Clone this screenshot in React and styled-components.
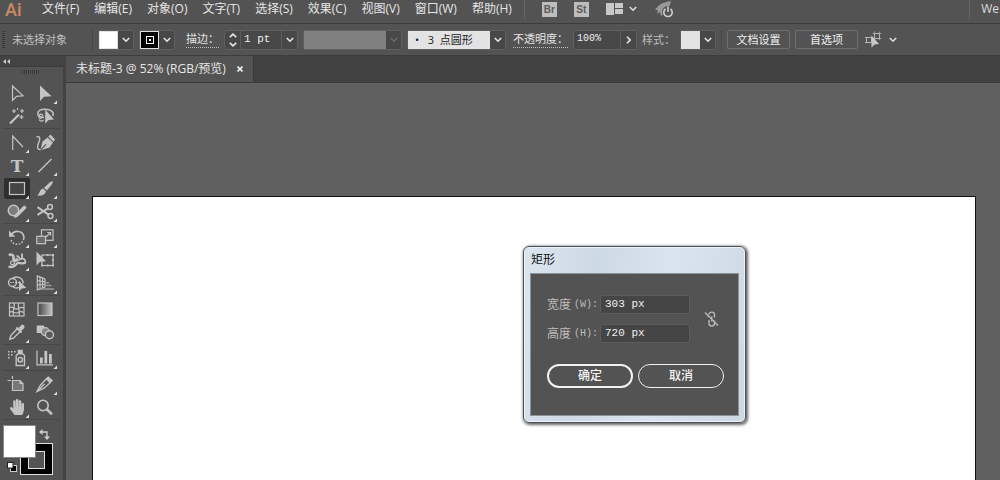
import React from 'react';
import styled, { createGlobalStyle, css } from 'styled-components';
import { FaHandPaper } from 'react-icons/fa';

const GlobalStyle = createGlobalStyle`
  * {
    box-sizing: border-box;
  }

  body {
    margin: 0;
    background: #606060;
    color: #dcdcdc;
    font-family: "Open Sans", "Noto Sans CJK SC", sans-serif;
    font-size: 12px;
    line-height: 16px;
  }

  button,
  input,
  select {
    margin: 0;
    padding: 0;
    border: none;
    border-radius: 0;
    outline: none;
    background: none;
    color: inherit;
    font: inherit;
  }

  svg {
    display: block;
    flex: none;
  }
`;

const Page = styled.div`
  display: flex;
  flex-direction: column;
  height: 100vh;
  overflow: hidden;
`;

/* ---------- menu bar ---------- */

const MenuBar = styled.header`
  display: flex;
  align-items: center;
  flex: none;
  height: 24px;
  padding: 0 1px 5px 5px;
  border-bottom: 1px solid #3c3c3c;
  background: #535353;
`;

const Logo = styled.span`
  align-self: flex-start;
  width: 28px;
  color: #c98a62;
  font-family: Roboto, sans-serif;
  font-size: 18px;
  font-weight: 500;
  line-height: 20px;
`;

const Menus = styled.nav`
  display: flex;
  gap: 15px;
  padding-left: 9px;
`;

const MenuItem = styled.button`
  white-space: nowrap;
  color: #e6e6e6;
`;

const Divider = styled.span`
  flex: none;
  width: 1px;
  height: 20px;
  background: ${({ $light }) => ($light ? '#666' : '#464646')};
`;

const AppButton = styled.button`
  width: 15px;
  height: 15px;
  background: #bdbdbd;
  color: #5b5b5b;
  font-family: "Liberation Sans", sans-serif;
  font-size: 10px;
  font-weight: bold;
  line-height: 15px;
`;

const MenuTools = styled.div`
  display: flex;
  align-items: center;
  flex: 1;
  gap: 17px;
  padding-left: 12px;
`;

const IconButton = styled.button`
  display: flex;
  align-items: center;
  gap: 6px;
`;

const Workspace = styled.button`
  padding-left: 11px;
  color: #dcdcdc;
`;

/* ---------- control bar ---------- */

const ControlBar = styled.div`
  display: flex;
  align-items: center;
  flex: none;
  height: 32px;
  padding-left: 2px;
  border-bottom: 1px solid #3c3c3c;
  background: #535353;
  font-size: 11px;
`;

const Grip = styled.span`
  flex: none;
  width: ${({ $wide }) => ($wide ? '18px' : '3px')};
  height: ${({ $wide }) => ($wide ? '4px' : '18px')};
  background: repeating-linear-gradient(
    ${({ $wide }) => ($wide ? '90deg' : '180deg')},
    #3a3a3a 0 1px,
    #535353 1px 2px
  );
`;

const Status = styled.span`
  width: 80px;
  margin-left: 7px;
  color: #bfbfbf;
  white-space: nowrap;
`;

const Controls = styled.div`
  display: flex;
  align-items: center;
  gap: 5px;
  padding-left: 5px;
`;

const Combo = styled.div`
  display: flex;
  height: 20px;
  margin-right: ${({ $space }) => $space || 0}px;
  border: 1px solid #606060;
  border-radius: 2px;
  background: #484848;
`;

const Swatch = styled.button`
  display: grid;
  place-items: center;
  width: 19px;
  height: 18px;
  border: 1px solid #e0e0e0;
  background: ${({ $color }) => $color};
`;

const Arrow = styled.button`
  display: grid;
  place-items: center;
  width: 15px;
  height: 18px;
  color: ${({ disabled }) => (disabled ? '#6c6c6c' : '#e6e6e6')};
`;

const Spinner = styled.button`
  display: grid;
  place-items: center;
  width: 15px;
  height: 18px;
  color: #e6e6e6;
`;

const numberText = css`
  color: #f0f0f0;
  font-family: "Liberation Mono", monospace;
  font-size: ${({ $small }) => ($small ? '10px' : '11px')};
`;

const ValueInput = styled.input`
  ${numberText}
  width: ${({ $width }) => $width}px;
  padding: 0 0 2px 3px;
  border-right: 1px solid #5c5c5c;
  ${({ $left }) => $left && 'border-left: 1px solid #5c5c5c;'}
`;

const Select = styled.select`
  appearance: none;
  width: 82px;
  height: 18px;
  padding: 0 0 0 7px;
  background: ${({ disabled }) => (disabled ? '#808080' : '#e3e3e3')};
  color: #222;
  opacity: 1;
`;

const DottedLabel = styled.label`
  height: 17px;
  border-bottom: 1px dotted #bdbdbd;
  color: #e4e4e4;
  white-space: nowrap;
`;

const PlainLabel = styled.span`
  color: #bdbdbd;
  white-space: nowrap;
`;

const BarButton = styled.button`
  width: 63px;
  height: 19px;
  border: 1px solid #6e6e6e;
  border-radius: 2px;
  color: #f0f0f0;
  line-height: 16px;
`;

/* ---------- main area ---------- */

const Main = styled.div`
  display: flex;
  flex: 1;
  min-height: 0;
`;

const ToolPanel = styled.aside`
  display: flex;
  flex-direction: column;
  flex: none;
  width: 66px;
  border-right: 3px solid #434343;
  background: #535353;
`;

const PanelHeader = styled.button`
  display: flex;
  align-items: center;
  height: 11px;
  padding-left: 3px;
  border-bottom: 1px solid #3c3c3c;
  background: #434343;
`;

const GripRow = styled.div`
  display: flex;
  justify-content: center;
  padding: 3px 2px 8px 0;
`;

const ToolGroup = styled.div`
  display: grid;
  grid-template-columns: 26px 26px;
  gap: 2px;
  margin: 0 3px;
  padding: 1px 0 1px 1px;
  border-bottom: 1px solid #484848;

  & + & {
    padding-top: 3px;
  }
`;

const Tool = styled.button`
  height: 21px;
  border-radius: 2px;
  background: ${({ $active }) => ($active ? '#2e2e2e' : 'none')};
  color: #c4c4c4;
`;

const ColorProxy = styled.div`
  display: grid;
  grid-template-columns: 17px 16px 17px;
  grid-template-rows: 18px 15px 17px;
  padding: 5px 0 0 3px;
`;

const FillBox = styled.button`
  grid-area: 1 / 1 / 3 / 3;
  z-index: 1;
  border: 1px solid #8a8a8a;
  background: #fff;
`;

const StrokeBox = styled.button`
  grid-area: 2 / 2 / 4 / 4;
  padding: 7px;
  border: 1px solid #e0e0e0;
  background: #000;

  &::after {
    content: "";
    display: block;
    height: 100%;
    border: 1px solid #e0e0e0;
    background: #535353;
  }
`;

const CornerButton = styled.button`
  display: grid;
  place-items: center;
  color: #cfcfcf;
`;

const DefaultColors = styled(CornerButton)`
  grid-area: 3 / 1;
`;

const Workarea = styled.div`
  display: flex;
  flex-direction: column;
  flex: 1;
  min-width: 0;
`;

const TabBar = styled.div`
  display: flex;
  flex: none;
  height: 27px;
  border-bottom: 1px solid #3c3c3c;
  background: #424242;
`;

const Tab = styled.div`
  display: flex;
  align-items: center;
  gap: 11px;
  padding: 0 10px;
  border-right: 1px solid #3a3a3a;
  background: #535353;
  color: #e6e6e6;
  white-space: nowrap;
`;

const Canvas = styled.main`
  position: relative;
  display: flex;
  flex: 1;
  padding: 113px 24px 0 26px;
  background: #606060;
`;

const Artboard = styled.div`
  flex: 1;
  border: 1px solid #111;
  border-bottom: none;
  background: #fff;
`;

/* ---------- dialog ---------- */

const Dialog = styled.form`
  position: absolute;
  top: 163px;
  left: 457px;
  padding: 0 6px 6px;
  border: 1px solid #4a5055;
  border-radius: 6px;
  background: linear-gradient(100deg, #dbe5ef 0%, #cdd9e5 30%, #dae4ee 60%, #ccd8e2 100%);
  box-shadow: 1px 1px 3px 1px rgba(0, 0, 0, 0.6), inset 0 0 0 1px #eef4f9;
`;

const DialogTitle = styled.h1`
  margin: 0;
  padding: 5px 1px;
  color: #111;
  font-size: 12px;
  font-weight: normal;
  line-height: 16px;
`;

const DialogBody = styled.div`
  padding: 21px 14px 27px 16px;
  border: 1px solid #8c949b;
  background: #535353;
`;

const Fields = styled.div`
  display: flex;
  align-items: center;
  gap: 14px;
`;

const FieldGrid = styled.div`
  display: grid;
  grid-template-columns: 53px 90px;
  row-gap: 10px;
  align-items: center;
`;

const FieldLabel = styled.label`
  display: flex;
  gap: 3px;
  color: #bdbdbd;
  white-space: nowrap;

  span {
    font-family: "Liberation Mono", "Noto Sans CJK SC", monospace;
    font-size: 10px;
  }
`;

const Field = styled.input`
  ${numberText}
  width: 100%;
  height: 19px;
  padding: 0 4px 2px;
  border: 1px solid #5c5c5c;
  border-radius: 2px;
  background: #454545;
`;

const Actions = styled.div`
  display: flex;
  gap: 5px;
  padding-top: 21px;
`;

const PillButton = styled.button`
  width: 86px;
  height: 24px;
  border: ${({ $primary }) => ($primary ? '2px' : '1px')} solid #f2f2f2;
  border-radius: 12px;
  color: #f5f5f5;
  font-weight: 500;
`;

/* ---------- drawings ---------- */

const Chevron = () => (
  <svg width="8" height="6" viewBox="0 0 8 6" fill="none" stroke="currentColor" strokeWidth="1.6">
    <path d="M0.8 1L4 4.2L7.2 1" />
  </svg>
);

const star = (x, y) => `M${x - 2} ${y}H${x + 2}M${x} ${y - 2}V${y + 2}`;

const icons = {
  select: <path d="M8.5 3V17.5L12.5 13.3L19 12.8Z" />,
  direct: <path d="M8 2.5V18L12 13.8L19.5 13.2Z" fill="currentColor" stroke="none" />,
  wand: (
    <>
      <path d="M6 17.5L15 8.5" strokeWidth="2.2" />
      <path d={star(10, 5)} />
      <path d={star(18, 5)} />
      <path d={star(17.5, 11)} />
      <path d="M13.5 2V4" />
    </>
  ),
  lasso: (
    <>
      <path d="M12 11.5C3 11.5 4 3.2 13 3.2C20 3.2 22.5 7 20.5 10" strokeWidth="1.5" />
      <path d="M11 10.5C11 7.2 6.5 7.6 6.8 10.6C7 13.4 10.4 12.6 9.6 10.6M7 13.5C8 15.5 10 15.5 11.5 14" />
      <path d="M13.2 3.5V17.5L16.7 14L22 13.4Z" fill="currentColor" stroke="none" />
    </>
  ),
  anchor: <path d="M8.7 18V4L19 15" />,
  curvature: (
    <>
      <path d="M4.5 5C7.5 3.8 8.5 6 7.3 9C5.8 12.6 3.8 17.5 8.5 17.5" strokeWidth="1.4" />
      <path d="M8.4 18.2L10.5 9.5L15.5 5.4L21 10.5L17.5 15.6Z" fill="currentColor" stroke="none" />
      <path d="M16.3 4.6L18.5 2.6L23 7.4L21.6 9.7Z" fill="currentColor" stroke="none" />
      <path d="M9 17.7L14 12.3" stroke="#535353" />
    </>
  ),
  type: (
    <text
      x="13"
      y="17"
      textAnchor="middle"
      fill="currentColor"
      stroke="none"
      fontFamily="DejaVu Serif, serif"
      fontSize="17"
      fontWeight="bold"
    >
      T
    </text>
  ),
  line: <path d="M6.5 17L19.5 4" strokeWidth="1.5" />,
  rect: <rect x="5.5" y="4.5" width="15" height="12" fill="#454545" />,
  brush: (
    <g fill="currentColor" stroke="none">
      <path d="M20.5 3C21.2 4 20.5 5.5 19.5 6.8L14.8 12.6L12 9.8L18 4.2Z" />
      <path d="M11.2 10.6L14 13.4C13 16.8 9 18.2 5.3 17.6C7.8 16 7.3 11.4 11.2 10.6Z" />
    </g>
  ),
  blob: (
    <>
      <circle cx="9.5" cy="9.5" r="5.2" fill="#7d7d7d" strokeWidth="1.5" />
      <path d="M21.5 5.5L12.5 14.5" strokeWidth="3.6" />
      <path d="M10 17L11 13L14 16Z" fill="currentColor" stroke="none" />
    </>
  ),
  scissors: (
    <>
      <circle cx="18" cy="6" r="2.4" strokeWidth="1.5" />
      <circle cx="18.5" cy="15" r="2.4" strokeWidth="1.5" />
      <path d="M5.5 6.2L16.5 13.6M5.5 13.8L16 7.4" strokeWidth="2" />
    </>
  ),
  rotate: (
    <>
      <path d="M7.5 8C10 3 18 3.2 19.7 8.8C20 10.4 20 11.6 19.4 13" strokeWidth="1.6" />
      <path d="M18.6 14.4C16.5 18.6 8.5 18.8 6.6 12" strokeDasharray="1.6 1.6" strokeWidth="1.5" />
      <path d="M5 3.5V9.8H11.3Z" fill="currentColor" stroke="none" />
    </>
  ),
  scale: (
    <>
      <rect x="9.5" y="2.8" width="11.5" height="10.5" />
      <rect x="4.8" y="9.3" width="8.7" height="7.4" fill="#6b6b6b" />
      <path d="M14 10L18 6M15.2 5.5H18.5V8.8" />
    </>
  ),
  width: (
    <>
      <path d="M5 5.5C7 3.5 10 5 9.5 8C9.2 10.5 12.5 11 13.5 8.5" strokeWidth="2.6" />
      <path d="M4.5 16.5C8 17.8 11.5 16 13 13.5C15 11.5 17 15 21.5 12.5" strokeWidth="2.4" />
      <path d="M12.5 6C15.5 6 15 9.6 17 9.2C19 8.8 17 6 18.5 3.5" strokeWidth="1.8" />
      <path d="M18 8.5C20.5 8.5 21.5 10.5 21.5 13" strokeWidth="1.6" />
      <circle cx="8.5" cy="12.8" r="1.9" fill="#535353" />
      <path d="M10 12L15.5 10" />
    </>
  ),
  transform: (
    <>
      <rect x="10" y="5" width="11" height="10.5" />
      <path
        d="M9 14.5h2v2h-2zM20 14.5h2v2h-2zM20 4h2v2h-2zM15 4h1.6v2h-1.6zM20 9.5h2v1.6h-2zM15 14.5h1.6v2h-1.6z"
        fill="currentColor"
        stroke="none"
      />
      <path d="M4.5 1.5V15.5L8 11.8L14 11.2Z" fill="currentColor" stroke="none" />
    </>
  ),
  builder: (
    <>
      <circle cx="8.5" cy="9.5" r="4" strokeWidth="1.4" />
      <path d="M9 5C12 3 19.5 4 19 10.5M9 14C11 15.4 13 15.2 15 14.4" strokeWidth="1.4" />
      <path d="M6 9.5H16" strokeDasharray="1.5 1" />
      <path d="M15 7.5V18L17.8 15.4L22.3 15Z" fill="currentColor" stroke="none" />
    </>
  ),
  perspective: (
    <>
      <path d="M5.3 3V16.8L13 14V6Z" />
      <path d="M8 4V15.8M10.6 5V14.8M5.3 7.5L13 8.8M5.3 12L13 11.5" />
      <path d="M14 9.8H17M14 12.5H19.5M8 16H22" stroke="#9a9a9a" strokeWidth="1.4" />
    </>
  ),
  mesh: (
    <>
      <rect x="5.5" y="4" width="14.5" height="13" />
      <path d="M5.5 8.5C9 6.5 11 12 14.5 9.5C16.5 8 18 8 20 9M5.5 13.5C9 10.5 12 16 14 13.5C16 12 18 12.6 20 13.5M9.5 4C12.5 7 7 12 10 17M15 4C12.5 8 17.5 13 14.5 17" />
    </>
  ),
  gradient: (
    <>
      <defs>
        <linearGradient id="tool-gradient">
          <stop offset="0" stopColor="#444" />
          <stop offset="1" stopColor="#c4c4c4" />
        </linearGradient>
      </defs>
      <rect x="6" y="4" width="14" height="12.5" fill="url(#tool-gradient)" />
    </>
  ),
  eyedropper: (
    <>
      <path d="M13.2 6.8L6.8 13.5L5.8 17.2L9.4 16.2L16 9.8" strokeWidth="1.4" />
      <path d="M12.5 5.5L17.5 10.5" strokeWidth="2.2" />
      <path d="M14.5 6L17.2 3.2C19.2 1.8 21.6 4 20 6.2L17.2 9Z" fill="currentColor" stroke="none" />
    </>
  ),
  blend: (
    <>
      <rect x="4.7" y="3.5" width="7.5" height="7.5" fill="currentColor" stroke="none" />
      <circle cx="13.3" cy="9.7" r="4" fill="#858585" />
      <circle cx="17.5" cy="12.8" r="4" fill="#5c5c5c" strokeWidth="1.4" />
    </>
  ),
  sprayer: (
    <>
      <path
        d="M4 3h1.6v1.6H4zM7 3h1.6v1.6H7zM10 3h1.6v1.6H10zM4 6h1.6v1.6H4zM7 6h1.6v1.6H7zM4 9h1.6v1.6H4zM13.7 1.8h5v3.4h-5z"
        fill="currentColor"
        stroke="none"
      />
      <path d="M12.2 17.5V7.5L14 5.8H18.5L20.5 7.5V17.5Z" strokeWidth="1.4" />
      <circle cx="16.3" cy="11.8" r="2.2" strokeWidth="1.5" />
    </>
  ),
  graph: (
    <>
      <path d="M5 2.5V16.8H21" />
      <path d="M8 9.5h2.8v6h-2.8zM12.4 3h2.8v12.5h-2.8zM17 6h2.8v9.5h-2.8z" fill="currentColor" stroke="none" />
    </>
  ),
  artboard: (
    <>
      <path d="M3.5 6.5H7M8.5 2V5" />
      <path d="M8.5 6.5H16L19 9.5V16.5H8.5Z" fill="#777" />
      <path d="M16 6.5V9.5H19" />
    </>
  ),
  slice: (
    <>
      <path d="M5 17.5L8.2 11.5L14.4 4.8L18.2 8.8L12 14.2Z" strokeWidth="1.3" />
      <path d="M5 17.5L12.5 10" />
      <path d="M14 4.3L16.2 2.2L21 6.6L18.6 9Z" fill="currentColor" stroke="none" />
    </>
  ),
  hand: <FaHandPaper x="5" y="2" size={16} stroke="none" />,
  zoom: (
    <>
      <circle cx="11" cy="8.5" r="5.2" strokeWidth="1.6" />
      <path d="M14.8 12.3L20 17.2" strokeWidth="2.6" />
    </>
  ),
};

const toolGroups = [
  [
    ['select', '选择工具', false],
    ['direct', '直接选择工具', true],
    ['wand', '魔棒工具', false],
    ['lasso', '套索工具', false],
  ],
  [
    ['anchor', '锚点工具', true],
    ['curvature', '曲率工具', false],
    ['type', '文字工具', true],
    ['line', '直线段工具', true],
    ['rect', '矩形工具', true],
    ['brush', '画笔工具', true],
    ['blob', '斑点画笔工具', true],
    ['scissors', '剪刀工具', true],
  ],
  [
    ['rotate', '旋转工具', true],
    ['scale', '比例缩放工具', true],
    ['width', '宽度工具', true],
    ['transform', '自由变换工具', false],
    ['builder', '形状生成器工具', true],
    ['perspective', '透视网格工具', true],
  ],
  [
    ['mesh', '网格工具', false],
    ['gradient', '渐变工具', false],
    ['eyedropper', '吸管工具', true],
    ['blend', '混合工具', false],
  ],
  [
    ['sprayer', '符号喷枪工具', true],
    ['graph', '柱形图工具', true],
  ],
  [
    ['artboard', '画板工具', false],
    ['slice', '切片工具', true],
    ['hand', '抓手工具', true],
    ['zoom', '缩放工具', false],
  ],
];

const menus = ['文件(F)', '编辑(E)', '对象(O)', '文字(T)', '选择(S)', '效果(C)', '视图(V)', '窗口(W)', '帮助(H)'];

function ToolIcon({ name, more }) {
  return (
    <svg width="26" height="21" viewBox="0 0 26 21" fill="none" stroke="currentColor" strokeWidth="1.2">
      {icons[name]}
      {more && <path d="M25 17.5V21H21.5Z" fill="#e0e0e0" stroke="none" />}
    </svg>
  );
}

function TopMenu() {
  return (
    <MenuBar>
      <Logo>Ai</Logo>
      <Menus>
        {menus.map((item) => (
          <MenuItem key={item} type="button">
            {item}
          </MenuItem>
        ))}
      </Menus>
      <MenuTools>
        <Divider $light />
        <AppButton type="button">Br</AppButton>
        <AppButton type="button">St</AppButton>
        <IconButton type="button" aria-label="排列文档">
          <svg width="17" height="12" viewBox="0 0 17 12" fill="#c8c8c8">
            <path d="M0 0h8v12H0zM9 0h8v5H9zM9 6h8v5H9z" />
          </svg>
          <Chevron />
        </IconButton>
        <IconButton type="button" aria-label="GPU 性能">
          <svg width="22" height="18" viewBox="0 0 22 18">
            <path d="M1 10C4 5 9 2 17 1C16 6 13 12 7 16L6 12L3 14L4 10Z" fill="#999" />
            <circle cx="14" cy="12" r="6" fill="#535353" />
            <path d="M11.5 9A4.2 4.2 0 1 0 16.5 9M14 6.5V12" fill="none" stroke="#d0d0d0" strokeWidth="1.6" />
          </svg>
        </IconButton>
      </MenuTools>
      <Divider $light />
      <Workspace type="button">We</Workspace>
    </MenuBar>
  );
}

function Options() {
  return (
    <ControlBar>
      <Grip />
      <Status>未选择对象</Status>
      <Divider />
      <Controls>
        <Combo>
          <Swatch type="button" $color="#fff" aria-label="填色" />
          <Arrow type="button" aria-label="填色选项">
            <Chevron />
          </Arrow>
        </Combo>
        <Combo $space={6}>
          <Swatch type="button" $color="#000" aria-label="描边颜色">
            <svg width="8" height="8" viewBox="0 0 8 8" fill="none" stroke="#fff">
              <rect x="0.5" y="0.5" width="7" height="7" />
              <path d="M3 3h2v2h-2z" fill="#fff" stroke="none" />
            </svg>
          </Swatch>
          <Arrow type="button" aria-label="描边选项">
            <Chevron />
          </Arrow>
        </Combo>
        <DottedLabel htmlFor="stroke">描边：</DottedLabel>
        <Combo>
          <Spinner type="button" aria-label="调整描边粗细">
            <svg width="8" height="14" viewBox="0 0 8 14" fill="none" stroke="currentColor" strokeWidth="1.6">
              <path d="M0.8 4.2L4 1.2L7.2 4.2M0.8 9.8L4 12.8L7.2 9.8" />
            </svg>
          </Spinner>
          <ValueInput id="stroke" $width={42} $left defaultValue="1 pt" />
          <Arrow type="button" aria-label="描边粗细">
            <Chevron />
          </Arrow>
        </Combo>
        <Combo>
          <Select disabled aria-label="变量宽度配置文件">
            <option />
          </Select>
          <Arrow type="button" disabled aria-label="配置文件选项">
            <Chevron />
          </Arrow>
        </Combo>
        <Combo $space={2}>
          <Select aria-label="画笔定义">
            <option>•&nbsp;&nbsp; 3&nbsp; 点圆形</option>
          </Select>
          <Arrow type="button" aria-label="画笔选项">
            <Chevron />
          </Arrow>
        </Combo>
        <DottedLabel htmlFor="opacity">不透明度：</DottedLabel>
        <Combo>
          <ValueInput id="opacity" $width={47} $small defaultValue="100%" />
          <Arrow type="button" aria-label="不透明度选项">
            <svg width="6" height="8" viewBox="0 0 6 8" fill="none" stroke="currentColor" strokeWidth="1.6">
              <path d="M1 0.8L4.2 4L1 7.2" />
            </svg>
          </Arrow>
        </Combo>
        <PlainLabel>样式：</PlainLabel>
        <Combo>
          <Swatch type="button" $color="#e3e3e3" aria-label="样式" />
          <Arrow type="button" aria-label="样式选项">
            <Chevron />
          </Arrow>
        </Combo>
        <Divider />
        <BarButton type="button">文档设置</BarButton>
        <BarButton type="button">首选项</BarButton>
        <IconButton type="button" aria-label="选择类似的对象">
          <svg width="20" height="18" viewBox="3 0 20 18" fill="none" stroke="#b4b4b4">
            <rect x="6.5" y="6.5" width="5" height="5" />
            <path d="M5 6.5H8M5 11.5H8" />
            <rect x="14.5" y="2.5" width="5" height="5" />
            <path d="M12.5 2.5H21.5M12.5 7.5H21.5M14.5 0.5V9M19.5 0.5V9" strokeWidth="0.7" />
            <path d="M11.5 4.5V16.5L14.5 13.5L19 13Z" fill="#c8c8c8" stroke="none" />
          </svg>
          <Chevron />
        </IconButton>
      </Controls>
    </ControlBar>
  );
}

function Tools() {
  return (
    <ToolPanel>
      <PanelHeader type="button" aria-label="折叠面板">
        <svg width="7" height="5" viewBox="0 0 7 5" fill="#c8c8c8">
          <path d="M3 0V5L0 2.5ZM7 0V5L4 2.5Z" />
        </svg>
      </PanelHeader>
      <GripRow>
        <Grip $wide />
      </GripRow>
      {toolGroups.map((group) => (
        <ToolGroup key={group[0][0]}>
          {group.map(([name, label, more]) => (
            <Tool key={name} type="button" aria-label={label} $active={name === 'rect'}>
              <ToolIcon name={name} more={more} />
            </Tool>
          ))}
        </ToolGroup>
      ))}
      <ColorProxy>
        <FillBox type="button" aria-label="填色" />
        <StrokeBox type="button" aria-label="描边" />
        <CornerButton type="button" aria-label="互换填色和描边">
          <svg width="11" height="11" viewBox="0 0 11 11">
            <path d="M3 3H8V8" fill="none" stroke="currentColor" strokeWidth="1.3" />
            <path d="M0 3L3.5 0V6ZM8 11L5 7.5H11Z" fill="currentColor" />
          </svg>
        </CornerButton>
        <DefaultColors type="button" aria-label="默认填色和描边">
          <svg width="10" height="10" viewBox="0 0 10 10">
            <rect x="3.5" y="3.5" width="6" height="6" fill="#000" stroke="#ccc" />
            <rect x="0.5" y="0.5" width="5.5" height="5.5" fill="#fff" stroke="#222" />
          </svg>
        </DefaultColors>
      </ColorProxy>
    </ToolPanel>
  );
}

function RectangleDialog() {
  return (
    <Dialog role="dialog" aria-labelledby="dialog-title">
      <DialogTitle id="dialog-title">矩形</DialogTitle>
      <DialogBody>
        <Fields>
          <FieldGrid>
            <FieldLabel htmlFor="rect-width">
              宽度<span>(W):</span>
            </FieldLabel>
            <Field id="rect-width" defaultValue="303 px" />
            <FieldLabel htmlFor="rect-height">
              高度<span>(H):</span>
            </FieldLabel>
            <Field id="rect-height" defaultValue="720 px" />
          </FieldGrid>
          <IconButton type="button" aria-label="约束宽度和高度比例">
            <svg width="15" height="16" viewBox="0 0 15 16" fill="none" stroke="#b8b8b8" strokeWidth="1.4">
              <path d="M5 3.5C5 0.3 10.5 0.3 10.5 3.5V6.5M4.5 6V4M10.5 9.5V12.5C10.5 15.8 5 15.8 5 12.5V9M7.7 5.5V10.5" />
              <path d="M1 1.5L14 14.5" />
            </svg>
          </IconButton>
        </Fields>
        <Actions>
          <PillButton type="button" $primary>
            确定
          </PillButton>
          <PillButton type="button">取消</PillButton>
        </Actions>
      </DialogBody>
    </Dialog>
  );
}

function App() {
  return (
    <>
      <GlobalStyle />
      <Page>
        <TopMenu />
        <Options />
        <Main>
          <Tools />
          <Workarea>
            <TabBar>
              <Tab>
                未标题-3 @ 52% (RGB/预览)
                <IconButton type="button" aria-label="关闭">
                  <svg width="6" height="6" viewBox="0 0 6 6" stroke="#f0f0f0" strokeWidth="1.6">
                    <path d="M0.5 0.5L5.5 5.5M5.5 0.5L0.5 5.5" />
                  </svg>
                </IconButton>
              </Tab>
            </TabBar>
            <Canvas>
              <Artboard />
              <RectangleDialog />
            </Canvas>
          </Workarea>
        </Main>
      </Page>
    </>
  );
}

export default App;
